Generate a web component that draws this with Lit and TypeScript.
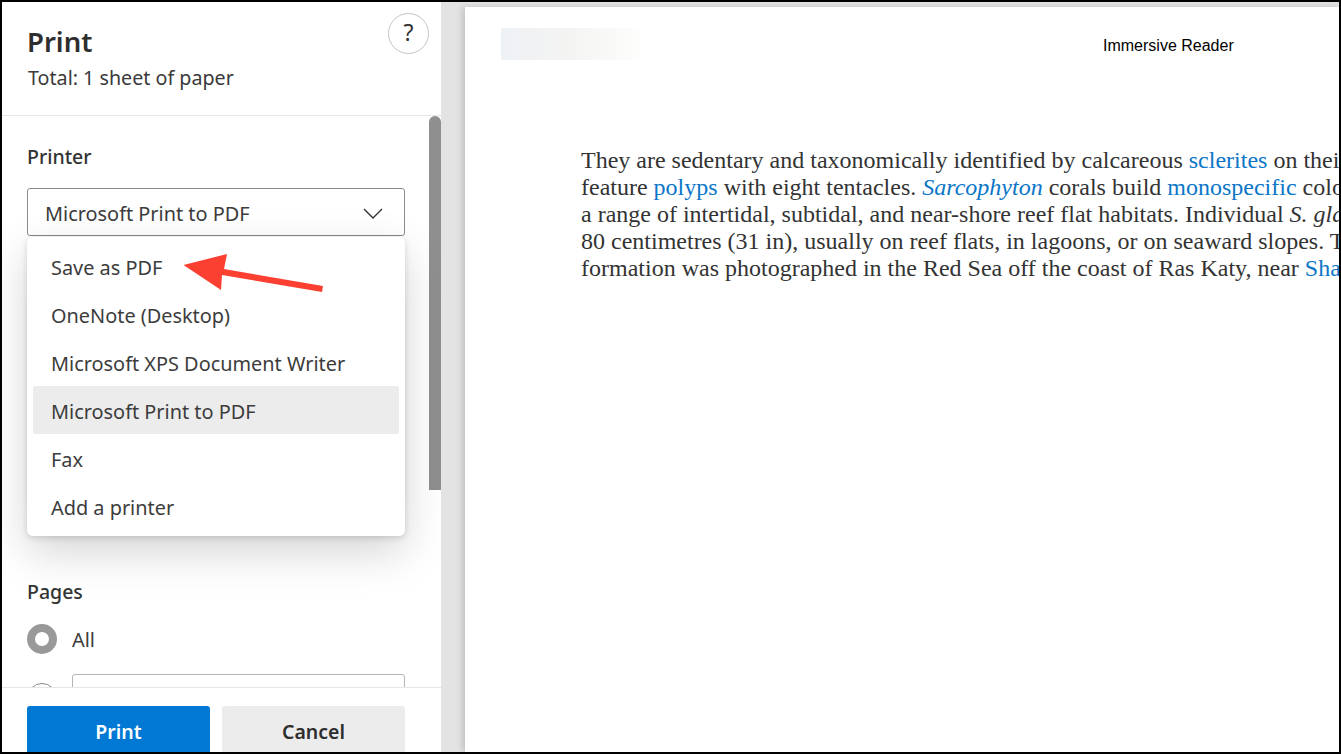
import { LitElement, html, css, svg } from 'lit';
import { customElement } from 'lit/decorators.js';

const PRINTERS = [
  'Save as PDF',
  'OneNote (Desktop)',
  'Microsoft XPS Document Writer',
  'Microsoft Print to PDF',
  'Fax',
  'Add a printer',
];

@customElement('app-root')
export class AppRoot extends LitElement {
  static styles = css`
    :host {
      display: flex;
      width: 1341px;
      height: 754px;
      box-sizing: border-box;
      border: 2px solid #000;
      overflow: hidden;
      background: #fff;
      font-family: 'Noto Sans', 'Open Sans', sans-serif;
      color: #333;
    }
    .panel {
      width: 439px;
      flex: none;
      display: flex;
      flex-direction: column;
      position: relative;
      background: #fff;
    }
    .head {
      height: 114px;
      flex: none;
      box-sizing: border-box;
      padding: 20px 12px 0 26px;
      border-bottom: 1px solid #e6e6e6;
      display: flex;
      justify-content: space-between;
      align-items: flex-start;
    }
    h1 {
      margin: 0 0 0 -1px;
      font-size: 27.5px;
      line-height: 40px;
      font-weight: 600;
      color: #2e2e2e;
    }
    .total {
      font-size: 19.7px;
      line-height: 26px;
      margin-top: 3px;
      color: #3a3a3a;
    }
    .help {
      width: 41px;
      height: 41px;
      box-sizing: border-box;
      margin-top: -9px;
      padding-bottom: 4px;
      border: 1px solid #c4c4c4;
      border-radius: 50%;
      display: flex;
      align-items: center;
      justify-content: center;
      font-size: 23px;
      color: #333;
    }
    .middle {
      flex: 1;
      display: flex;
      min-height: 0;
      overflow: hidden;
    }
    .scroll {
      flex: 1;
      box-sizing: border-box;
      padding: 27px 24px 0 25px;
      position: relative;
    }
    .thumb-track {
      width: 12px;
      flex: none;
    }
    .thumb {
      height: 374px;
      background: #8f8f8f;
      border-radius: 6px 6px 0 0;
    }
    .label {
      font-size: 19.5px;
      line-height: 28px;
      font-weight: 500;
      color: #333;
    }
    .select {
      margin-top: 17px;
      width: 378px;
      height: 48px;
      box-sizing: border-box;
      border: 1px solid #8a8a8a;
      border-radius: 3px;
      padding: 2px 21px 0 17px;
      display: flex;
      align-items: center;
      justify-content: space-between;
      font-size: 19.9px;
      color: #3c3c3c;
    }
    .menu {
      position: absolute;
      left: 25px;
      top: 121px;
      width: 378px;
      height: 299px;
      box-sizing: border-box;
      padding: 5px 6px;
      background: #fff;
      border-radius: 6px;
      box-shadow: 0 2px 6px rgba(0, 0, 0, 0.14), 0 16px 44px rgba(0, 0, 0, 0.17);
      z-index: 2;
    }
    .item {
      height: 48px;
      box-sizing: border-box;
      display: flex;
      align-items: center;
      padding: 2px 0 0 18px;
      font-size: 19.9px;
      color: #3c3c3c;
      border-radius: 2px;
    }
    .item.on {
      background: #ececec;
    }
    .pages {
      margin-top: 342px;
    }
    .radio-row {
      display: flex;
      align-items: center;
      gap: 15px;
      margin-top: 18px;
      font-size: 19.9px;
      color: #3c3c3c;
    }
    .radio {
      width: 30px;
      height: 30px;
      box-sizing: border-box;
      border-radius: 50%;
      border: 8px solid #999;
      background: #fff;
      flex: none;
    }
    .radio.off {
      border: 1px solid #8a8a8a;
    }
    .custom {
      display: flex;
      gap: 15px;
      margin-top: 20px;
    }
    .custom .radio {
      margin-top: 9px;
    }
    .custom input {
      flex: 1;
      height: 40px;
      box-sizing: border-box;
      border: 1px solid #b5b5b5;
      border-radius: 3px;
      background: #fff;
      min-width: 0;
      padding: 0;
    }
    .foot {
      height: 65px;
      flex: none;
      box-sizing: border-box;
      border-top: 1px solid #e6e6e6;
      padding: 18px 36px 0 25px;
      display: flex;
      gap: 12px;
      background: #fff;
    }
    .foot button {
      flex: 1;
      height: 50px;
      border: none;
      border-radius: 3px;
      font: 600 19.5px 'Noto Sans', 'Open Sans', sans-serif;
      padding: 0;
    }
    .print {
      background: #0078d4;
      color: #fff;
    }
    .cancel {
      background: #ececec;
      color: #2e2e2e;
    }
    .pointer {
      position: absolute;
      left: 0;
      top: 0;
      z-index: 3;
      pointer-events: none;
    }
    .preview {
      flex: 1;
      min-width: 0;
      background: #e3e3e3;
      padding: 5px 0 0 24px;
      overflow: hidden;
    }
    .sheet {
      height: 100%;
      background: #fff;
      box-shadow: -3px 0 6px rgba(0, 0, 0, 0.14);
      padding: 21px 0 0 36px;
      box-sizing: border-box;
      overflow: hidden;
    }
    .sheet-top {
      display: flex;
      height: 32px;
      align-items: center;
    }
    .smudge {
      width: 139px;
      height: 32px;
      flex: none;
      background: linear-gradient(90deg, #eef1f5, #f3f3f2 45%, #fdfdfb);
    }
    .title {
      margin-left: 463px;
      margin-top: 4px;
      font: 16px 'Liberation Sans', Arial, sans-serif;
      color: #000;
      white-space: nowrap;
    }
    .body {
      margin: 87px 0 0 80px;
      font: 24px/27px 'Liberation Serif', 'Times New Roman', serif;
      color: #333;
      white-space: nowrap;
    }
    .body a {
      color: #0b76c8;
      text-decoration: none;
    }
  `;

  render() {
    return html`
      <section class="panel">
        <header class="head">
          <div>
            <h1>Print</h1>
            <div class="total">Total: 1 sheet of paper</div>
          </div>
          <div class="help">?</div>
        </header>
        <div class="middle">
          <div class="scroll">
            <div class="label">Printer</div>
            <div class="select">
              <span>Microsoft Print to PDF</span>
              <svg width="20" height="11" viewBox="0 0 20 11" fill="none" stroke="#333" stroke-width="1.4">
                <path d="M1 1l9 9 9-9" />
              </svg>
            </div>
            <div class="menu">
              ${PRINTERS.map(
                (p) => html`<div class="item ${p === 'Microsoft Print to PDF' ? 'on' : ''}">${p}</div>`
              )}
            </div>
            <div class="pages">
              <div class="label">Pages</div>
              <div class="radio-row"><span class="radio"></span>All</div>
              <div class="custom">
                <span class="radio off"></span>
                <input type="text" />
              </div>
            </div>
          </div>
          <div class="thumb-track"><div class="thumb"></div></div>
        </div>
        <footer class="foot">
          <button class="print">Print</button>
          <button class="cancel">Cancel</button>
        </footer>
        <svg class="pointer" width="439" height="400">
          ${svg`<path fill="#fb4032" d="M181.500 263 225 252 222 267 321 284 320 290 220 273 219 288Z" />`}
        </svg>
      </section>
      <main class="preview">
        <div class="sheet">
          <div class="sheet-top">
            <div class="smudge"></div>
            <div class="title">Immersive Reader</div>
          </div>
          <div class="body">
            They are sedentary and taxonomically identified by calcareous <a>sclerites</a> on their<br />
            feature <a>polyps</a> with eight tentacles. <a><i>Sarcophyton</i></a> corals build <a>monospecific</a> colonies<br />
            a range of intertidal, subtidal, and near-shore reef flat habitats. Individual <i>S. glaucum</i><br />
            80 centimetres (31 in), usually on reef flats, in lagoons, or on seaward slopes. The<br />
            formation was photographed in the Red Sea off the coast of Ras Katy, near <a>Sharm</a>
          </div>
        </div>
      </main>
    `;
  }
}
